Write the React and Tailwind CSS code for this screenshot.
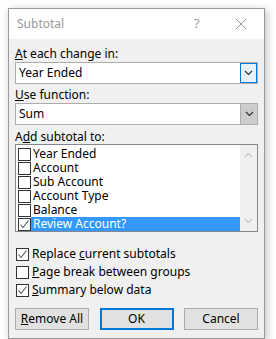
import React from 'react';

const font = { fontFamily: '"Noto Sans", "Open Sans", sans-serif' };

const Check = ({ checked }) => (
  <div className="w-[13px] h-[13px] border border-[#333333] bg-white flex items-center justify-center shrink-0">
    {checked && (
      <svg width="11" height="11" viewBox="0 0 11 11">
        <polyline points="1.5,5.5 4,8.5 9.5,1.5" fill="none" stroke="#555555" strokeWidth="1.1" />
      </svg>
    )}
  </div>
);

const Chevron = ({ up, color = '#333333' }) => (
  <svg width="9" height="6" viewBox="0 0 9 6">
    <polyline
      points={up ? '1,5 4.5,1.5 8,5' : '1,1 4.5,4.5 8,1'}
      fill="none"
      stroke={color}
      strokeWidth="1.2"
    />
  </svg>
);

const fields = ['Year Ended', 'Account', 'Sub Account', 'Account Type', 'Balance', 'Review Account?'];

const Combo = ({ value, focused }) => (
  <div className="h-[22px] flex border border-[#adadad] bg-white">
    <div className="flex-1 flex items-center pl-[3px] text-[12px] text-black">{value}</div>
    <div
      className={
        focused
          ? 'w-[17px] border border-[#0078d7] bg-[#e5f1fb] flex items-center justify-center'
          : 'w-[17px] border-l border-[#adadad] bg-[#cccccc] flex items-center justify-center'
      }
    >
      <Chevron />
    </div>
  </div>
);

const Option = ({ checked, children }) => (
  <div className="h-[18px] flex items-center gap-[3px] text-[12px] text-black">
    <Check checked={checked} />
    <span>{children}</span>
  </div>
);

export default function App() {
  return (
    <div className="w-[276px] h-[339px] bg-white overflow-hidden pt-[8px] pl-[8px]" style={font}>
      <div className="w-[257px] h-[331px] border border-[#9a9a9a] bg-[#f0f0f0] shadow-[2px_2px_8px_rgba(0,0,0,0.25)] flex flex-col">
        {/* barre de titre */}
        <div className="h-[30px] bg-white flex items-center pl-[8px] text-[12px] text-[#999999]">
          <span className="flex-1">Subtotal</span>
          <span className="w-[12px] text-[13px] mr-[29px]">?</span>
          <svg width="12" height="12" viewBox="0 0 12 12" className="mr-[17px]">
            <path d="M1 1 L11 11 M11 1 L1 11" stroke="#999999" strokeWidth="1" />
          </svg>
        </div>

        <div className="flex-1 px-[6px] pt-[7px] flex flex-col text-[12px] text-black">
          <div className="h-[15px] leading-[15px]">
            <span className="underline">A</span>t each change in:
          </div>
          <div className="mt-[1px]">
            <Combo value="Year Ended" focused />
          </div>

          <div className="h-[15px] leading-[15px] mt-[3px]">
            <span className="underline">U</span>se function:
          </div>
          <div className="mt-[1px]">
            <Combo value="Sum" />
          </div>

          <div className="h-[15px] leading-[15px] mt-[4px]">
            A<span className="underline">d</span>d subtotal to:
          </div>
          <div className="h-[88px] border border-[#828790] bg-white flex">
            <div className="flex-1 pl-[2px] pt-[2px]">
              {fields.map((f, i) => {
                const last = i === fields.length - 1;
                return (
                  <div key={f} className="h-[14px] flex items-center">
                    <Check checked={last} />
                    <span
                      className={
                        last
                          ? 'flex-1 h-[14px] leading-[14px] pl-[2px] bg-[#3399ff] text-white'
                          : 'flex-1 h-[14px] leading-[14px] pl-[2px]'
                      }
                    >
                      {f}
                    </span>
                  </div>
                );
              })}
            </div>
            <div className="w-[17px] bg-[#f0f0f0] flex flex-col items-center justify-between py-[7px]">
              <Chevron up color="#c2c2c2" />
              <Chevron color="#c2c2c2" />
            </div>
          </div>

          <div className="mt-[13px] pl-[1px]">
            <Option checked>
              Replace <span className="underline">c</span>urrent subtotals
            </Option>
            <Option>
              <span className="underline">P</span>age break between groups
            </Option>
            <Option checked>
              <span className="underline">S</span>ummary below data
            </Option>
          </div>

          <div className="mt-[9px] flex justify-between">
            <button className="w-[74px] h-[22px] border border-[#adadad] bg-[#e1e1e1] text-[12px] text-black">
              <span className="underline">R</span>emove All
            </button>
            <button className="w-[74px] h-[22px] border-2 border-[#0078d7] bg-[#e1e1e1] text-[12px] text-black">
              OK
            </button>
            <button className="w-[74px] h-[22px] border border-[#adadad] bg-[#e1e1e1] text-[12px] text-black">
              Cancel
            </button>
          </div>
        </div>
      </div>
    </div>
  );
}
